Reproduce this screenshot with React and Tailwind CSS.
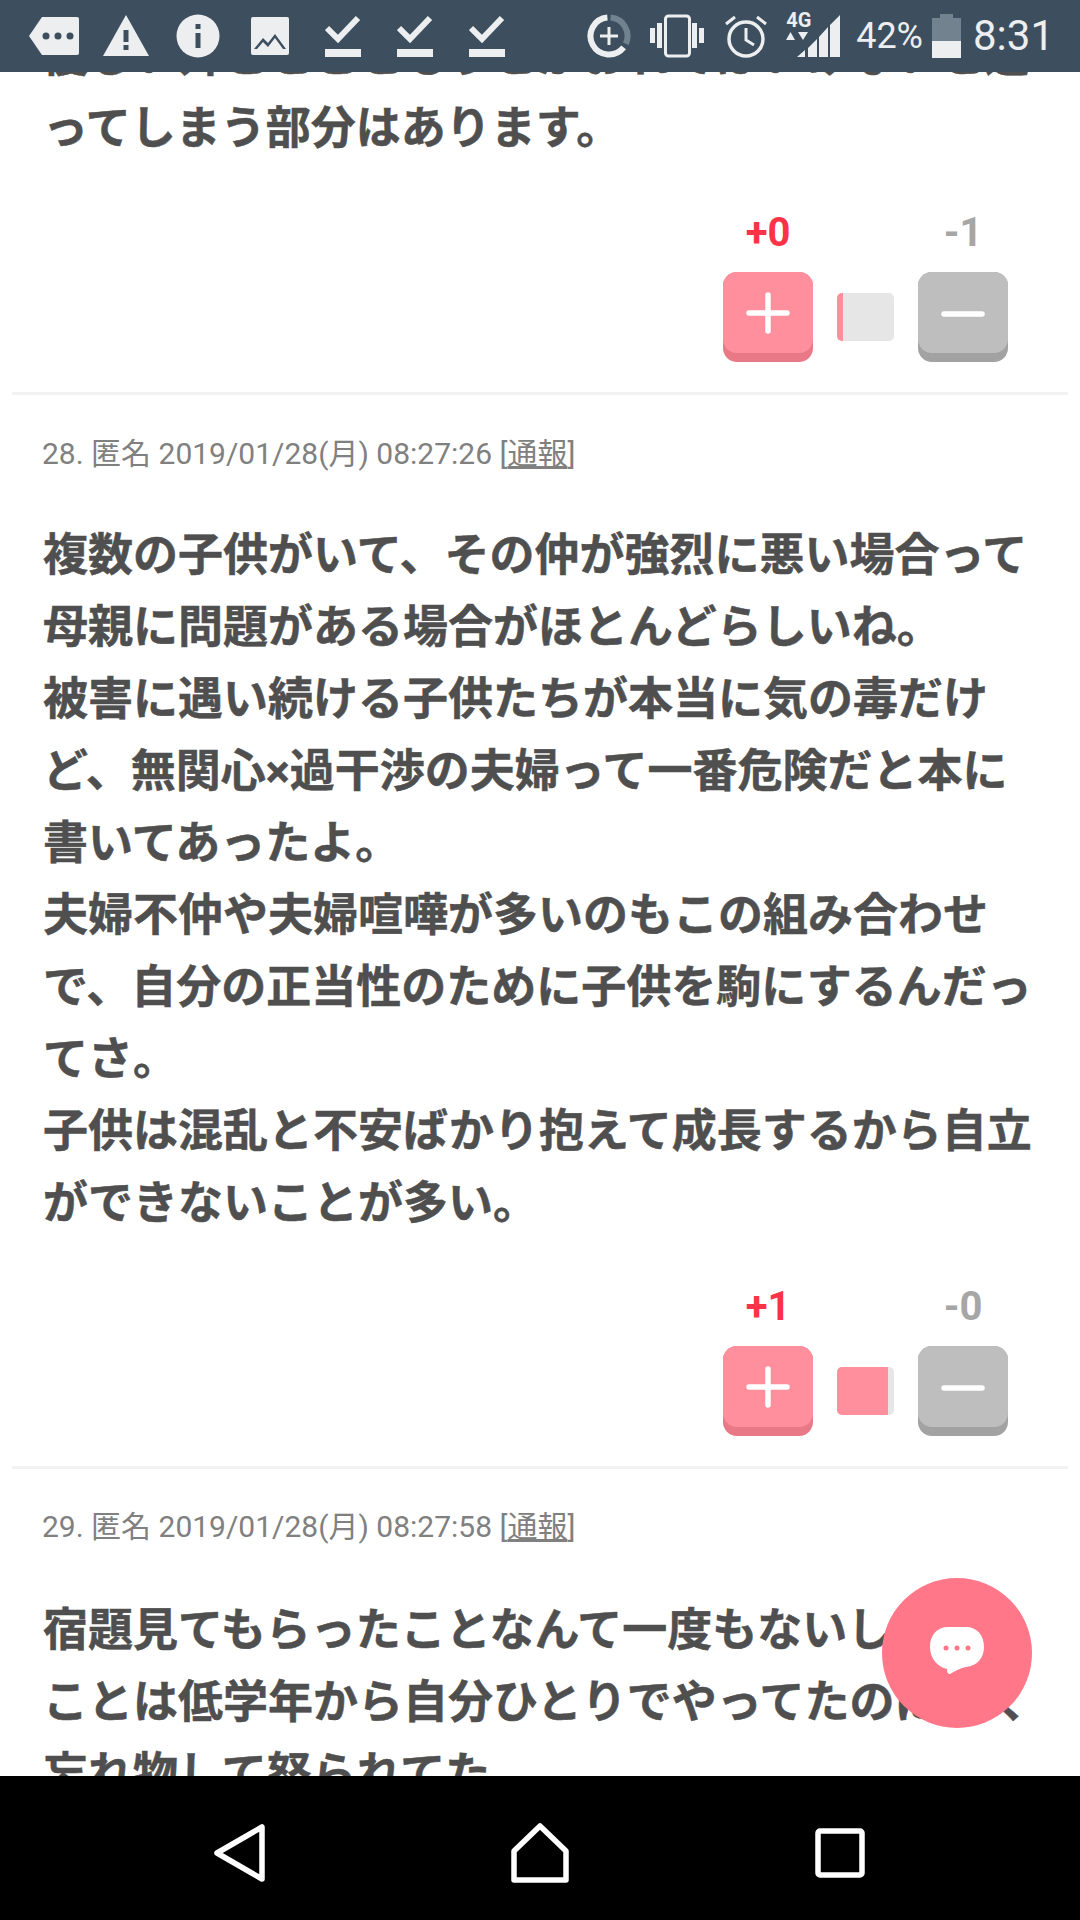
const jp = "font-['Roboto','Noto_Sans_CJK_JP',sans-serif]";

const StatusIcons = () => (
  <div className="flex items-center">
    <svg width="52" height="44" viewBox="0 0 52 44" className="ml-[28px]">
      <path fill="#eceef0" d="M14 3h35a2 2 0 0 1 2 2v34a2 2 0 0 1-2 2H14L1 22z" />
      <circle cx="18" cy="22" r="3.500" fill="#3d4f5f" />
      <circle cx="30" cy="22" r="3.500" fill="#3d4f5f" />
      <circle cx="42" cy="22" r="3.500" fill="#3d4f5f" />
    </svg>
    <svg width="48" height="44" viewBox="0 0 48 44" className="ml-[22px]">
      <path fill="#eceef0" d="M24 1l23 41H1z" />
      <rect x="21.500" y="16" width="5" height="12" fill="#3d4f5f" />
      <rect x="21.500" y="31" width="5" height="5" fill="#3d4f5f" />
    </svg>
    <svg width="44" height="44" viewBox="0 0 44 44" className="ml-[26px]">
      <circle cx="22" cy="22" r="21.500" fill="#eceef0" />
      <rect x="19.500" y="10" width="5" height="5" fill="#3d4f5f" />
      <rect x="19.500" y="19" width="5" height="15" fill="#3d4f5f" />
    </svg>
    <svg width="40" height="40" viewBox="0 0 40 40" className="ml-[30px]">
      <rect x="1" y="1" width="38" height="38" rx="2" fill="#eceef0" />
      <path fill="#3d4f5f" d="M4 33l9-11 5 5 7-9 11 15h-3l-8-11-7 9-5-5-6 7z" />
    </svg>
    {[0, 1, 2].map((i) => (
      <svg key={i} width="36" height="44" viewBox="0 0 36 44" className={i === 0 ? 'ml-[35px]' : 'ml-[36px]'}>
        <path fill="none" stroke="#eceef0" strokeWidth="6" d="M2 14l11 11L33 4" />
        <rect x="0" y="35" width="36" height="8" fill="#eceef0" />
      </svg>
    ))}
  </div>
);

const StatusRight = () => (
  <div className="flex items-center">
    <svg width="44" height="44" viewBox="0 0 44 44">
      <path d="M36.600 33.400A18.500 18.500 0 1 1 20.400 3.600" fill="none" stroke="#eceef0" strokeWidth="6" />
      <path d="M23.600 3.600A18.500 18.500 0 0 1 38.800 29.800" fill="none" stroke="#72838f" strokeWidth="6" />
      <path fill="none" stroke="#eceef0" strokeWidth="3" d="M22 13v18M13 22h18" />
    </svg>
    <svg width="54" height="44" viewBox="0 0 54 44" className="ml-[19px]">
      <rect x="0" y="14" width="5" height="15" fill="#eceef0" />
      <rect x="7" y="9" width="5" height="25" fill="#eceef0" />
      <rect x="42" y="9" width="5" height="25" fill="#eceef0" />
      <rect x="49" y="14" width="5" height="15" fill="#eceef0" />
      <rect x="15.500" y="2" width="24" height="40" rx="3" fill="none" stroke="#eceef0" strokeWidth="3" />
    </svg>
    <svg width="44" height="46" viewBox="0 0 44 46" className="ml-[20px]">
      <circle cx="22" cy="26" r="17" fill="none" stroke="#eceef0" strokeWidth="3.500" />
      <path fill="none" stroke="#eceef0" strokeWidth="3" d="M22 15v12l8 5M2 11l9-7M42 11l-9-7" />
    </svg>
    <div className="relative ml-[18px] w-[54px] h-[46px]">
      <svg width="54" height="46" viewBox="0 0 54 46" className="absolute top-0 left-0">
        <path fill="#eceef0" d="M54 2v42H44V12zM42 14v30h-9V24zM31 26v18h-9v-9zM19 37v7h-8z" />
        <path fill="#eceef0" d="M0 27h9l-4.500-8zM12 19h10l-5 8z" />
      </svg>
      <span className="absolute top-[-3px] left-0 text-[20px] leading-[20px] font-bold text-[#eceef0] font-['Roboto',sans-serif]">4G</span>
    </div>
    <span className="ml-[16px] text-[36px] leading-none text-[#eceef0] font-['Roboto',sans-serif]">42%</span>
    <svg width="29" height="44" viewBox="0 0 29 44" className="ml-[9px]">
      <path fill="#72838f" d="M8 0h13v4h8v23H0V4h8z" />
      <rect x="0" y="27" width="29" height="17" fill="#eceef0" />
    </svg>
    <span className="ml-[12px] text-[42px] leading-none text-[#eceef0] font-['Roboto',sans-serif]">8:31</span>
  </div>
);

const VoteRow = ({ plus, minus, fill }) => (
  <div className="flex justify-end pr-[72px]">
    <div className="flex flex-col items-center w-[90px]">
      <span className="h-[34px] text-[40px] leading-[34px] font-bold text-[#fb3347] font-['Roboto',sans-serif]">{plus}</span>
      <button className="mt-[22px] w-[90px] h-[90px] rounded-[14px] bg-[#ea7987] flex flex-col">
        <div className="w-full h-[81px] rounded-[14px] bg-[#ff8f9c] flex items-center justify-center">
          <svg width="44" height="42" viewBox="0 0 44 42">
            <path stroke="#fff" strokeWidth="5.500" strokeLinecap="round" d="M22 3v36M3 21h38" />
          </svg>
        </div>
      </button>
    </div>
    <div className="mx-[24px] mt-[77px] w-[57px] h-[48px] rounded-[5px] bg-[#e6e6e6] overflow-hidden">
      <div className="h-full bg-[#ff8f9c]" style={{ width: `${fill}px` }} />
    </div>
    <div className="flex flex-col items-center w-[90px]">
      <span className="h-[34px] text-[40px] leading-[34px] font-bold text-[#a6a6a6] font-['Roboto',sans-serif]">{minus}</span>
      <button className="mt-[22px] w-[90px] h-[90px] rounded-[14px] bg-[#a2a2a2] flex flex-col">
        <div className="w-full h-[81px] rounded-[14px] bg-[#bebebe] flex items-center justify-center pt-[3px]">
          <svg width="44" height="8" viewBox="0 0 44 8">
            <path stroke="#fff" strokeWidth="5.500" strokeLinecap="round" d="M3 4h38" />
          </svg>
        </div>
      </button>
    </div>
  </div>
);

const PostText = ({ lines }) => (
  <div className={`pl-[43px] text-[45px] leading-[72px] font-bold text-[#4f4f4f] [-webkit-text-stroke:0.5px_#4f4f4f] whitespace-nowrap ${jp}`}>
    {lines.map((line, i) => (
      <p key={i}>{line}</p>
    ))}
  </div>
);

const Meta = ({ no, date }) => (
  <div className={`pl-[42px] text-[30px] leading-[40px] text-[#808080] whitespace-nowrap ${jp}`}>
    {no}. 匿名 {date} [<span className="underline">通報</span>]
  </div>
);

const Divider = () => <div className="mx-[12px] h-[3px] bg-[#f2f2f2]" />;

export default function App() {
  return (
    <div className="relative w-[1080px] h-[1920px] flex flex-col bg-white overflow-hidden">
      <header className="relative z-10 shrink-0 h-[72px] bg-[#3d4f5f] flex items-center justify-between pr-[26px]">
        <StatusIcons />
        <StatusRight />
      </header>

      <main className="flex-1 min-h-0 overflow-hidden">
        <div className="mt-[-51px]">
          <PostText lines={['優しい外ことこともうとかおれてはいけないと迷', 'ってしまう部分はあります。']} />
          <div className="mt-[51px]">
            <VoteRow plus="+0" minus="-1" fill={6} />
          </div>
          <div className="mt-[30px]"><Divider /></div>
          <div className="mt-[39px]"><Meta no={28} date="2019/01/28(月) 08:27:26" /></div>
          <div className="mt-[46px]">
            <PostText
              lines={[
                '複数の子供がいて、その仲が強烈に悪い場合って',
                '母親に問題がある場合がほとんどらしいね。',
                '被害に遇い続ける子供たちが本当に気の毒だけ',
                'ど、無関心×過干渉の夫婦って一番危険だと本に',
                '書いてあったよ。',
                '夫婦不仲や夫婦喧嘩が多いのもこの組み合わせ',
                'で、自分の正当性のために子供を駒にするんだっ',
                'てさ。',
                '子供は混乱と不安ばかり抱えて成長するから自立',
                'ができないことが多い。',
              ]}
            />
          </div>
          <div className="mt-[50px]">
            <VoteRow plus="+1" minus="-0" fill={51} />
          </div>
          <div className="mt-[30px]"><Divider /></div>
          <div className="mt-[38px]"><Meta no={29} date="2019/01/28(月) 08:27:58" /></div>
          <div className="mt-[48px]">
            <PostText
              lines={[
                '宿題見てもらったことなんて一度もないし自分の',
                'ことは低学年から自分ひとりでやってたのによく',
                '忘れ物して怒られてた。',
              ]}
            />
          </div>
        </div>
      </main>

      <nav className="relative z-10 shrink-0 h-[144px] bg-black flex items-center justify-center pt-[10px]">
        <div className="w-[300px] flex justify-center">
          <svg width="52" height="58" viewBox="0 0 52 58">
            <path fill="none" stroke="#fff" strokeWidth="5.500" strokeLinejoin="round" d="M48 3v52L3 29z" />
          </svg>
        </div>
        <div className="w-[300px] flex justify-center">
          <svg width="58" height="60" viewBox="0 0 58 60">
            <path fill="none" stroke="#fff" strokeWidth="5.500" strokeLinejoin="round" d="M29 3l26 25v29H3V28z" />
          </svg>
        </div>
        <div className="w-[300px] flex justify-center">
          <svg width="50" height="50" viewBox="0 0 50 50">
            <rect x="3" y="3" width="44" height="44" rx="2" fill="none" stroke="#fff" strokeWidth="5.500" />
          </svg>
        </div>
      </nav>

      <button className="absolute z-20 left-[882px] top-[1578px] w-[150px] h-[150px] rounded-full bg-[#ff7788] flex items-center justify-center pb-[6px]">
        <svg width="54" height="47" viewBox="0 0 54 47">
          <path fill="#fff" d="M18 0h18c11 0 18 8 18 20 0 11-7 19-18 20-5 1-11 4-16 7-2 0-3-1-3-5-9-2-17-10-17-22C0 8 7 0 18 0z" />
          <circle cx="16" cy="21" r="2.500" fill="#ff7788" />
          <circle cx="27" cy="21" r="2.500" fill="#ff7788" />
          <circle cx="38" cy="21" r="2.500" fill="#ff7788" />
        </svg>
      </button>
    </div>
  );
}
